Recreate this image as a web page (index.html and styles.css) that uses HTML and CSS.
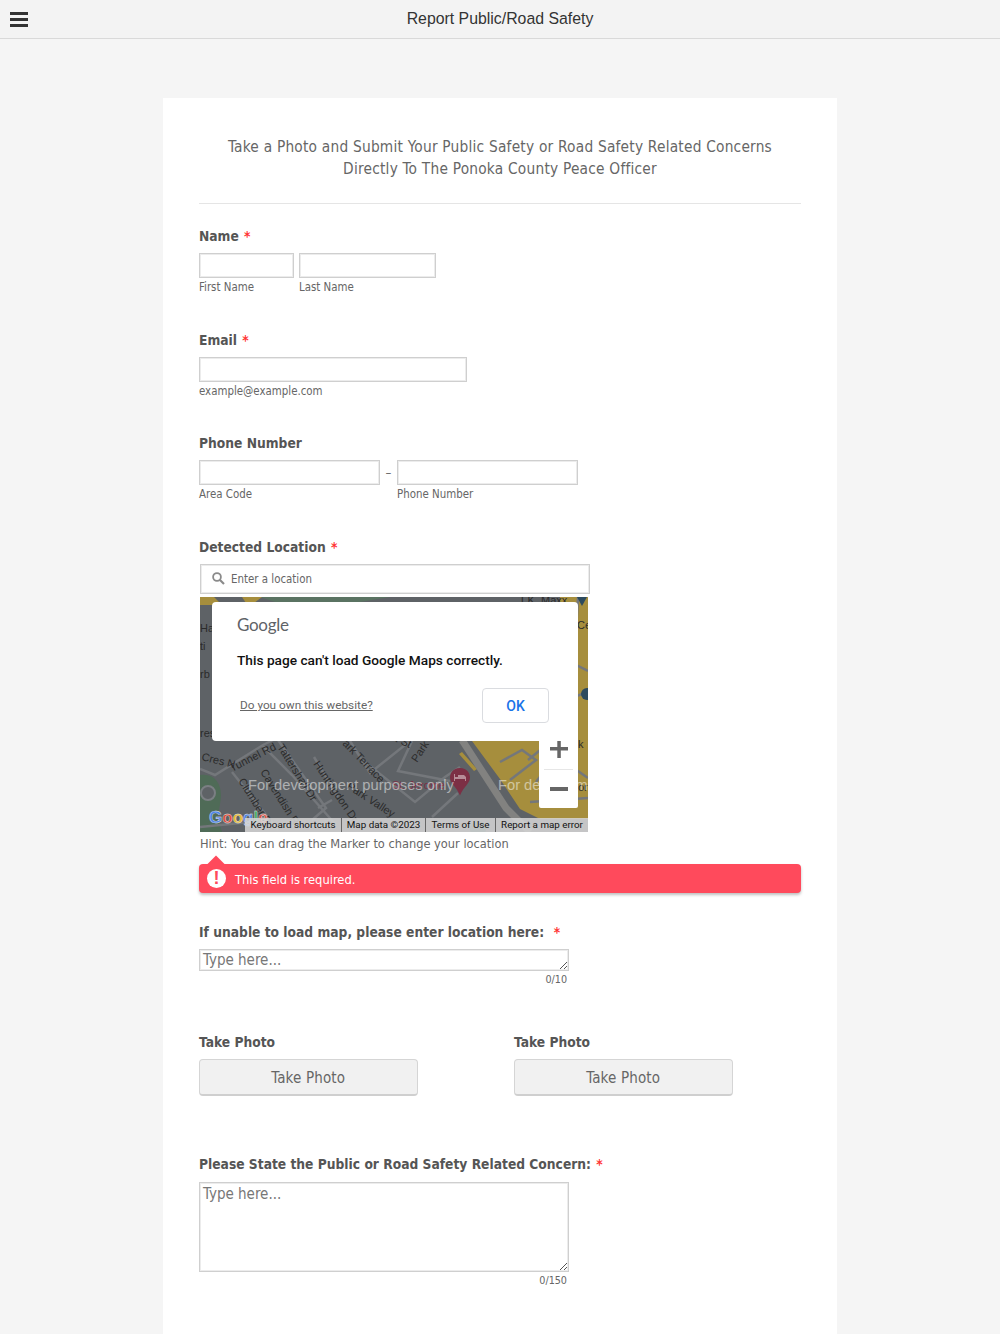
FILE: index.html
```html
<!DOCTYPE html>
<html lang="en">
<head>
<meta charset="utf-8">
<title>Report Public/Road Safety</title>
<link rel="stylesheet" href="styles.css">
</head>
<body>
<header class="topbar">
  <svg class="burger" width="18" height="15" viewBox="0 0 18 15"><path fill="#333" d="M0 0h18v3H0zM0 6h18v3H0zM0 12h18v3H0z"/></svg>
  <div class="topbar-title">Report Public/Road Safety</div>
</header>
<main class="card">
  <div class="intro">
    <p>Take a Photo and Submit Your Public Safety or Road Safety Related Concerns</p>
    <p>Directly To The Ponoka County Peace Officer</p>
  </div>

  <section class="field f-name">
    <h2 class="label">Name <span class="req">*</span></h2>
    <div class="row">
      <div class="sub"><div class="input w95"></div><span class="cap">First Name</span></div>
      <div class="sub"><div class="input w137"></div><span class="cap">Last Name</span></div>
    </div>
  </section>

  <section class="field f-email">
    <h2 class="label">Email <span class="req">*</span></h2>
    <div class="sub"><div class="input w268"></div><span class="cap">example@example.com</span></div>
  </section>

  <section class="field f-phone">
    <h2 class="label">Phone Number</h2>
    <div class="row">
      <div class="sub"><div class="input w181"></div><span class="cap">Area Code</span></div>
      <span class="dash">–</span>
      <div class="sub"><div class="input w181"></div><span class="cap">Phone Number</span></div>
    </div>
  </section>

  <section class="field f-loc">
    <h2 class="label">Detected Location <span class="req">*</span></h2>
    <div class="search">
      <svg width="13" height="13" viewBox="0 0 13 13"><circle cx="5" cy="5" r="3.900" fill="none" stroke="#8a8a8a" stroke-width="1.800"/><path d="M8 8l4 4" stroke="#8a8a8a" stroke-width="2.200"/></svg>
      <span>Enter a location</span>
    </div>
    <div class="map">
      <svg class="map-art" width="388" height="235" viewBox="0 0 388 235">
        <rect width="388" height="235" fill="#5e6266"/>
        <path fill="#5a7362" d="M60 0h130l-30 5H75z"/>
        <path fill="#a68e3d" d="M0 0h14l8 8H0zM42 0h20l-8 6H46zM360 0h28v145h-28z"/>
        <path fill="#a68e3d" d="M272 144h116v78h-48l-20-10-20-30z"/>
        <path fill="#a68e3d" d="M259 157l3-2 15 17-3 2z"/>
        <path fill="#4f6b57" d="M0 178c14-2 21 8 21 20 0 8-3 16-3 24l4 13H0z"/>
        <circle cx="8" cy="196" r="7" fill="#5e6266" stroke="#7b7f83" stroke-width="2"/>
        <g fill="none" stroke="#74777b" stroke-width="2.500">
          <path d="M0 172l15 6 48-30 12-6M62 148l30 30 44 50M32 175l46 58M78 143l48 68-14 12M114 160l24 40M150 144l20 32 40-32M165 165l50 40 30-25 15-10M212 144l-14 30 52 10M118 211l14-8M232 220l26-24M0 230l60-6"/>
          <path d="M300 165l22-12 14 10-26 20M336 185l20-26 32 22M330 205l58-4M350 145l-22 18M378 0l-8 145M360 60l28 14M360 105l28-10"/>
        </g>
        <path fill="none" stroke="#828280" stroke-width="7" d="M262 143l44 68 24 24"/>
        <g class="road-labels">
          <text x="1" y="163" transform="rotate(14 1 163)">Cres N</text>
          <text x="32" y="175" transform="rotate(-27 32 175)">Tunnel Rd</text>
          <text x="77" y="150" transform="rotate(58 77 150)">Tattershall Dr</text>
          <text x="38" y="184" transform="rotate(58 38 184)">Clumber Dr</text>
          <text x="60" y="175" transform="rotate(58 60 175)">Cavendish R</text>
          <text x="113" y="167" transform="rotate(56 113 167)">Huntingdon Dr</text>
          <text x="142" y="147" transform="rotate(46 142 147)">ark Terrace</text>
          <text x="175" y="135" transform="rotate(25 175 135)">Mont St</text>
          <text x="217" y="166" transform="rotate(-57 217 166)">Park</text>
          <text x="146" y="191" transform="rotate(33 146 191)">Park Valley</text>
          <text class="poi" x="192" y="192">St. Jerome</text>
          <text x="0" y="35">Ha</text>
          <text x="0" y="53">ti</text>
          <text x="0" y="81">rb</text>
          <text x="0" y="140">res</text>
          <text x="319" y="7">T.K. Maxx</text>
          <text x="377" y="32">Ce</text>
          <text x="378" y="151">k</text>
          <text x="378" y="194">or</text>
        </g>
        <path fill="#7c2f45" d="M260 171c-7.200 0-10 5.500-10 9.500 0 6 6.500 9 10 18 3.500-9 10-12 10-18 0-4-2.800-9.500-10-9.500z"/>
        <path fill="#b78c98" d="M254 177h1v3h3v-2h6l2 2v4h-1v-2h-10v2h-1z"/>
        <path fill="#2c4a5e" d="M377 0h10l-5 9z"/>
        <circle cx="387" cy="97" r="6" fill="#2c4a5e"/>
        <circle cx="278" cy="232" r="8" fill="#2f4f4f"/>
      </svg>
      <span class="dev dev-a">For development purposes only</span>
      <span class="dev dev-b">For development purposes only</span>
      <div class="zoom-ctl">
        <svg width="18" height="18" viewBox="0 0 18 18"><path fill="#666" d="M0 7h18v3.500H0zM7.300 0h3.500v18H7.300z"/></svg>
        <span class="zoom-sep"></span>
        <svg class="minus" width="18" height="4" viewBox="0 0 18 4"><path fill="#666" d="M0 0h18v4H0z"/></svg>
      </div>
      <span class="g-logo" aria-hidden="true"><span class="gb">G</span><span class="gr">o</span><span class="gy">o</span><span class="gb">g</span><span class="gg">l</span><span class="gr">e</span></span>
      <div class="attrib">
        <span class="a1">Keyboard shortcuts</span><span class="a2">Map data ©2023</span><span class="a3">Terms of Use</span><span class="a4">Report a map error</span>
      </div>
      <div class="dialog">
        <div class="g-word">Google</div>
        <div class="d-msg">This page can't load Google Maps correctly.</div>
        <div class="d-foot">
          <a class="d-link">Do you own this website?</a>
          <button class="d-ok">OK</button>
        </div>
      </div>
    </div>
    <div class="hint">Hint: You can drag the Marker to change your location</div>
    <div class="error">
      <span class="err-icon">!</span>
      <span class="err-text">This field is required.</span>
    </div>
  </section>

  <section class="field f-unable">
    <h2 class="label">If unable to load map, please enter location here:&nbsp; <span class="req">*</span></h2>
    <div class="area a-small">Type here...<svg class="grip" width="9" height="9" viewBox="0 0 9 9"><path d="M1 8l7-7M5 8l3-3" stroke="#555" stroke-width="1" fill="none"/></svg></div>
    <div class="count">0/10</div>
  </section>

  <section class="photos">
    <div class="photo">
      <h2 class="label">Take Photo</h2>
      <button class="btn">Take Photo</button>
    </div>
    <div class="photo">
      <h2 class="label">Take Photo</h2>
      <button class="btn">Take Photo</button>
    </div>
  </section>

  <section class="field f-concern">
    <h2 class="label">Please State the Public or Road Safety Related Concern: <span class="req">*</span></h2>
    <div class="area a-big">Type here...<svg class="grip" width="9" height="9" viewBox="0 0 9 9"><path d="M1 8l7-7M5 8l3-3" stroke="#555" stroke-width="1" fill="none"/></svg></div>
    <div class="count">0/150</div>
  </section>
</main>
</body>
</html>
```
FILE: styles.css
```css
* { box-sizing: border-box; }
html, body { margin: 0; padding: 0; height: 1334px; overflow: hidden; }
body {
  background: #f5f5f5;
  font-family: "DejaVu Sans Condensed", "DejaVu Sans", sans-serif;
  color: #555;
}
h2, p { margin: 0; }
.topbar {
  height: 39px;
  background: #f3f3f3;
  border-bottom: 1px solid #d9d9d9;
  display: flex;
  align-items: center;
  justify-content: center;
  position: relative;
}
.burger { position: absolute; left: 10px; top: 12px; }
.topbar-title {
  font: 15.850px/1 "Liberation Sans", Arial, sans-serif;
  color: #333;
  margin-top: -1px;
}
.card {
  width: 674px;
  height: 1236px;
  margin: 59px auto 0;
  background: #fff;
  padding: 0 36px;
}
.intro {
  height: 106px;
  padding-top: 38px;
  border-bottom: 1px solid #e5e5e5;
  text-align: center;
  font-size: 15.300px;
  letter-spacing: .22px;
  line-height: 22px;
  color: #666;
}
.label {
  font-size: 13.700px;
  font-weight: 700;
  line-height: 18px;
  color: #555;
}
.req { color: #f33; margin-left: 1px; }
.row { display: flex; gap: 5px; }
.sub { display: flex; flex-direction: column; }
.input {
  height: 25px;
  border: 1px solid #cfcfcf;
  box-shadow: inset 0 0 0 1px #ececec;
  background: #fff;
}
.w95 { width: 95px; }
.w137 { width: 137px; }
.w268 { width: 268px; }
.w181 { width: 181px; }
.cap {
  font-size: 11.400px;
  line-height: 14px;
  margin-top: 2px;
  color: #666;
}
.f-name { padding-top: 23px; }
.f-name .row { margin-top: 8px; }
.f-email { padding-top: 36.500px; }
.f-email .sub { margin-top: 8px; }
.f-phone { padding-top: 36.500px; }
.f-phone .row { margin-top: 8px; gap: 0; }
.dash { width: 17px; text-align: center; font-size: 13px; line-height: 26px; color: #666; }
.f-loc { padding-top: 36.500px; }
.search {
  width: 390px;
  height: 30px;
  margin-top: 8px;
  margin-left: 1px;
  border: 1px solid #cfcfcf;
  box-shadow: inset 0 0 0 1px #ececec;
  display: flex;
  align-items: center;
  padding-left: 11px;
  gap: 6px;
  font-size: 11.400px;
  color: #666;
}
.map {
  position: relative;
  width: 388px;
  height: 235px;
  margin: 3.500px 0 0 1px;
  overflow: hidden;
}
.map-art { display: block; }
.road-labels text { font: 11px "Liberation Sans", Arial, sans-serif; fill: #2b2b2b; }
.road-labels .poi { fill: #7c2f45; }
.dev {
  position: absolute;
  top: 179px;
  font: 14.700px/18px "Liberation Sans", Arial, sans-serif;
  color: rgba(255,255,255,.5);
  white-space: nowrap;
}
.dev-a { left: 48px; }
.dev-b { left: 298px; }
.zoom-ctl {
  position: absolute;
  right: 10px;
  top: 132px;
  width: 39px;
  height: 79px;
  background: #fff;
  border-radius: 0 0 2px 2px;
  display: flex;
  flex-direction: column;
  align-items: center;
  padding-top: 11px;
}
.zoom-sep { width: 29px; height: 1px; background: #e6e6e6; margin: 11px 0 17px; }
.g-logo {
  position: absolute;
  left: 9px;
  top: 210px;
  font: 700 17px/22px "Liberation Sans", Arial, sans-serif;
  white-space: nowrap;
  -webkit-text-stroke: .4px #e8e8e8;
}
.gb { color: #4a83e8; } .gr { color: #df4a3a; } .gy { color: #eab92c; } .gg { color: #3aa757; }
.attrib {
  position: absolute;
  left: 45px;
  right: 0;
  top: 221px;
  height: 14px;
  background: rgba(215,215,215,.85);
  display: flex;
  font: 9.800px/14px Roboto, Arial, sans-serif;
  color: #111;
  white-space: nowrap;
}
.attrib span { border-left: 1px solid #666; text-align: center; }
.attrib .a1 { width: 96px; border-left: 0; }
.attrib .a2 { width: 84px; }
.attrib .a3 { width: 70px; }
.attrib .a4 { width: 93px; }
.dialog {
  position: absolute;
  left: 12px;
  top: 5px;
  width: 366px;
  height: 139px;
  background: #fff;
  border-radius: 4px;
  padding: 12px 25px 0;
}
.g-word { font: 400 17px/22px Lato, sans-serif; color: #5f6368; letter-spacing: -.3px; }
.d-msg { font: 500 13.700px/18px Roboto, Arial, sans-serif; color: #111; margin-top: 15px; }
.d-foot { display: flex; justify-content: space-between; align-items: center; margin-top: 19px; padding: 0 4px 0 3px; }
.d-link { font: 400 11.800px/16px Roboto, Arial, sans-serif; color: #666; text-decoration: underline; margin-top: -1px; }
.d-ok {
  width: 67px;
  height: 35px;
  background: #fff;
  border: 1px solid #dadce0;
  border-radius: 4px;
  font: 500 14px Roboto, Arial, sans-serif;
  color: #1a73e8;
  padding: 0;
}
.hint { font-size: 12.700px; line-height: 14px; margin: 5px 0 0 1px; color: #666; }
.error {
  position: relative;
  height: 29px;
  margin-top: 13px;
  background: #ff4a5c;
  border-radius: 4px;
  box-shadow: 0 2px 3px rgba(0,0,0,.25);
  display: flex;
  align-items: center;
  padding-left: 8px;
  gap: 9px;
  color: #fff;
  font-size: 12.800px;
}
.err-text { padding-top: 1px; }
.error::before {
  content: "";
  position: absolute;
  left: 11px;
  top: -6px;
  width: 12px;
  height: 12px;
  background: #ff4a5c;
  transform: rotate(45deg);
}
.err-icon {
  position: relative;
  width: 19px;
  height: 19px;
  border-radius: 50%;
  background: #fff;
  color: #ff4a5c;
  font: 700 18px/19px "Liberation Sans", Arial, sans-serif;
  text-align: center;
}
.f-unable { padding-top: 30px; }
.area {
  position: relative;
  width: 370px;
  margin-top: 8px;
  border: 1px solid #cfcfcf;
  box-shadow: inset 0 0 0 1px #ececec;
  padding: 0 3px;
  font-size: 15px;
  color: #777;
}
.a-small { height: 22px; line-height: 21px; }
.a-big { height: 90px; line-height: 20px; margin-top: 8.500px; padding-top: 1px; }
.grip { position: absolute; right: 0; bottom: 0; }
.count { width: 368px; text-align: right; font-size: 10.700px; line-height: 12px; margin-top: 3px; color: #666; }
.photos { display: flex; gap: 96.500px; padding-top: 47px; }
.photo { width: 218.500px; }
.btn {
  display: block;
  width: 100%;
  height: 37px;
  margin-top: 8px;
  background: #f1f1f1;
  border: 1px solid #d5d5d5;
  border-bottom: 2px solid #cfcfcf;
  border-radius: 4px;
  font-family: "DejaVu Sans Condensed", "DejaVu Sans", sans-serif;
  font-size: 15px;
  letter-spacing: .15px;
  color: #666;
  padding: 1px 0 0;
}
.f-concern { padding-top: 59px; }
```
